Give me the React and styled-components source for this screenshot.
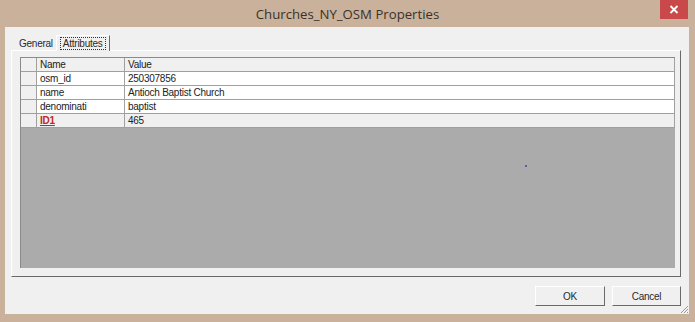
import React from 'react'
import styled, { createGlobalStyle } from 'styled-components'

const Global = createGlobalStyle`
  html, body { margin: 0; padding: 0; background: #c9b19b; }
  body {
    font-family: "Liberation Sans", Arial, sans-serif;
    font-size: 10px;
    letter-spacing: -0.25px;
    color: #1e1e1e;
  }
`

const Frame = styled.div`
  width: 695px;
  height: 322px;
  background: #c9b19b;
  display: flex;
  flex-direction: column;
  overflow: hidden;
`

const TitleBar = styled.div`
  height: 27px;
  flex: none;
  display: flex;
  align-items: center;
  justify-content: center;
  position: relative;
  font-family: "Open Sans", "Noto Sans", sans-serif;
  font-size: 13.2px;
  letter-spacing: 0;
  color: #3a3129;
`

const CloseButton = styled.div`
  position: absolute;
  top: 0;
  right: 7px;
  width: 28px;
  height: 19px;
  background: #c9494a;
  color: #fff;
  display: flex;
  align-items: center;
  justify-content: center;
`

const Client = styled.div`
  flex: none;
  height: 287px;
  margin: 0 6px 0 5px;
  background: #f0f0f0;
  display: flex;
  flex-direction: column;
  padding: 7px 8px 0 6px;
  box-sizing: border-box;
  position: relative;
`

const TabStrip = styled.div`
  display: flex;
  align-items: flex-end;
  height: 16px;
  padding-left: 6px;
  gap: 1px;
`

const Tab = styled.div`
  height: ${p => (p.$active ? '16px' : '14px')};
  padding: 0 ${p => (p.$active ? '3px' : '2px')};
  display: flex;
  align-items: center;
  box-sizing: border-box;
  background: #f0f0f0;
  position: relative;
  z-index: 1;
  margin-bottom: ${p => (p.$active ? '-1px' : '0')};
  border-left: ${p => (p.$active ? '1px solid #fff' : 'none')};
  border-top: ${p => (p.$active ? '1px solid #fff' : 'none')};
  border-right: ${p => (p.$active ? '1px solid #696969' : 'none')};
  color: #2a2a2a;
`

const FocusLabel = styled.span`
  border: 1px dotted #333;
  padding: 0 2px;
  line-height: 11px;
`

const Panel = styled.div`
  height: 227px;
  box-sizing: border-box;
  border-top: 1px solid #fff;
  border-left: 1px solid #fff;
  border-right: 1px solid #696969;
  border-bottom: 1px solid #696969;
  padding: 6px 5px 8px 8px;
  display: flex;
`

const Grid = styled.div`
  flex: 1;
  background: #ababab;
  border-top: 1px solid #8a8a8a;
  border-left: 1px solid #8a8a8a;
  position: relative;
`

const Row = styled.div`
  display: grid;
  grid-template-columns: 16px 88px 1fr;
  height: 14px;
`

const Cell = styled.div`
  box-sizing: border-box;
  border-right: 1px solid #a0a0a0;
  border-bottom: 1px solid #a0a0a0;
  background: ${p => (p.$shade ? '#f0f0f0' : '#fff')};
  padding-left: 3px;
  line-height: 13px;
  white-space: nowrap;
  overflow: hidden;
  color: ${p => (p.$key ? '#c0271f' : '#222')};
  font-weight: ${p => (p.$key ? 'bold' : 'normal')};
  text-decoration: ${p => (p.$key ? 'underline' : 'none')};
`

const Dot = styled.div`
  position: absolute;
  left: 504px;
  top: 107px;
  width: 2px;
  height: 2px;
  background: #5560a8;
`

const ButtonRow = styled.div`
  display: flex;
  justify-content: flex-end;
  gap: 7px;
  margin-top: 9px;
`

const Button = styled.div`
  width: ${p => p.$w}px;
  height: 20px;
  box-sizing: border-box;
  border-top: 1px solid #fff;
  border-left: 1px solid #fff;
  border-right: 1px solid #6a6a6a;
  border-bottom: 1px solid #6a6a6a;
  display: flex;
  align-items: center;
  justify-content: center;
  color: #2a2a2a;
`

const Grip = styled.svg`
  position: absolute;
  right: 0;
  bottom: 0;
`

const rows = [
  { name: 'osm_id', value: '250307856' },
  { name: 'name', value: 'Antioch Baptist Church' },
  { name: 'denominati', value: 'baptist' },
  { name: 'ID1', value: '465', key: true }
]

export default function App() {
  return (
    <Frame>
      <Global />
      <TitleBar>
        Churches_NY_OSM Properties
        <CloseButton>
          <svg width="10" height="9" viewBox="0 0 10 9">
            <path d="M1.5 1 L8.5 8 M8.5 1 L1.5 8" stroke="#fff" strokeWidth="1.8" />
          </svg>
        </CloseButton>
      </TitleBar>
      <Client>
        <TabStrip>
          <Tab>General</Tab>
          <Tab $active>
            <FocusLabel>Attributes</FocusLabel>
          </Tab>
        </TabStrip>
        <Panel>
          <Grid>
            <Row>
              <Cell $shade />
              <Cell $shade>Name</Cell>
              <Cell $shade>Value</Cell>
            </Row>
            {rows.map(r => (
              <Row key={r.name}>
                <Cell $shade />
                <Cell $shade={r.key} $key={r.key}>{r.name}</Cell>
                <Cell $shade={r.key}>{r.value}</Cell>
              </Row>
            ))}
            <Dot />
          </Grid>
        </Panel>
        <ButtonRow>
          <Button $w={70}>OK</Button>
          <Button $w={69}>Cancel</Button>
        </ButtonRow>
        <Grip width="10" height="10" viewBox="0 0 10 10">
          <path d="M9 2 L2 9 M9 5 L5 9 M9 8 L8 9" stroke="#9a9a9a" strokeWidth="1" />
        </Grip>
      </Client>
    </Frame>
  )
}
